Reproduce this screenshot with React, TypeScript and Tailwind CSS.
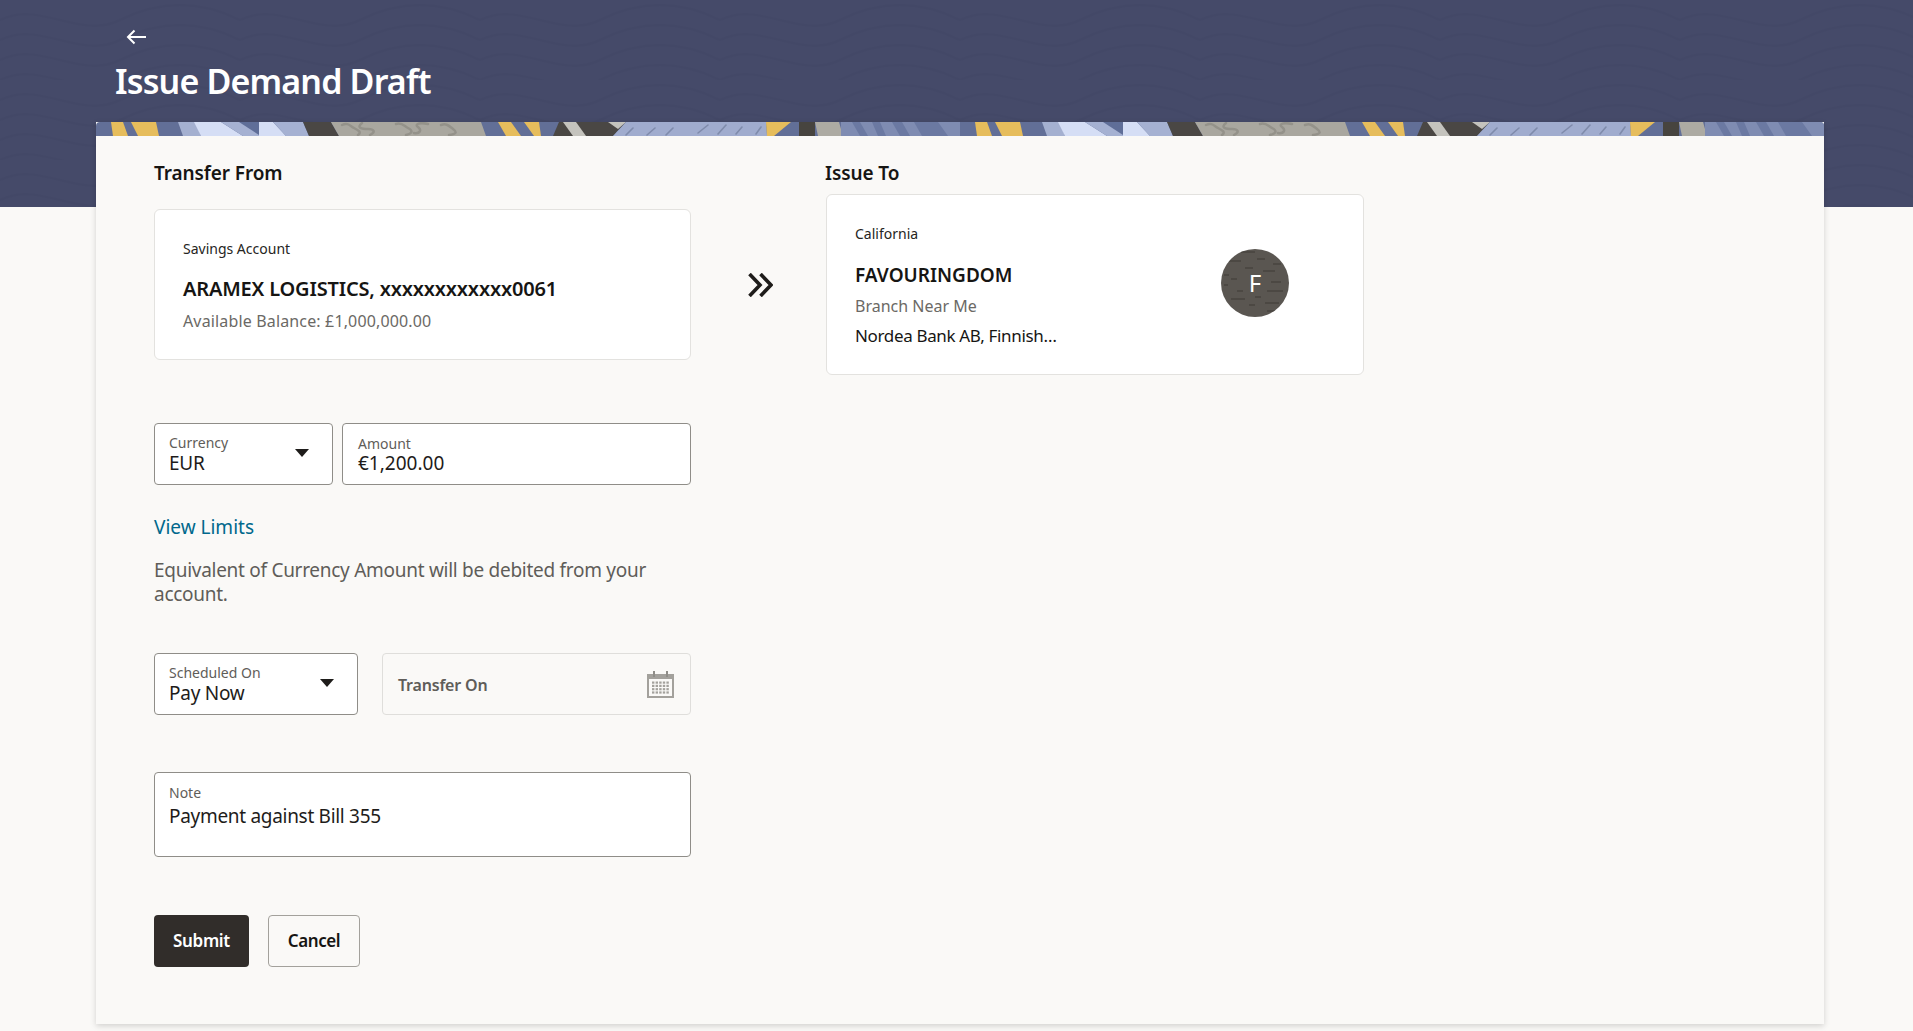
import * as React from "react"

const sans = "font-['Noto_Sans',sans-serif]"

function BannerTile({ x }: { x: number }) {
  return (
    <g transform={`translate(${x} 0)`}>
      <rect x="0" y="0" width="864" height="14" fill="#626f97" />
      <polygon points="15,0 27,0 32,14 17,14" fill="#e6bd5c" />
      <polygon points="35,0 60,0 63,14 42,14" fill="#e6bd5c" />
      <polygon points="82,0 100,0 105,14 87,14" fill="#a4b0d0" />
      <polygon points="98,0 125,0 147,14 105,14" fill="#d5def5" />
      <polygon points="125,0 163,0 163,14 147,14" fill="#a5b1d2" />
      <polygon points="143,0 163,0 163,13" fill="#5f6e98" />
      <polygon points="163,0 177,0 190,14 163,14" fill="#d5def5" />
      <polygon points="177,0 207,0 213,14 190,14" fill="#a5b1d2" />
      <polygon points="207,0 235,0 243,14 213,14" fill="#4a4744" />
      <polygon points="235,0 385,0 390,14 243,14" fill="#a9a79f" />
      <g fill="none" stroke="#94928a" strokeWidth="2.5" strokeLinecap="round">
        <path d="M246 3c6-3 8 1 12 3s8 4 4 7" />
        <path d="M266 1c-6 5 0 6 6 6s8 3 2 6" />
        <path d="M300 2c6-2 8 2 12 4s6 5-2 7" />
        <path d="M318 11c6 1 8-3 4-6s2-5 10-3" />
        <path d="M345 3c6-2 8 1 12 4s4 5-4 6" />
      </g>
      <polygon points="402,0 415,0 425,14 410,14" fill="#e6bd5c" />
      <polygon points="428,0 443,0 445,14 438,14" fill="#e6bd5c" />
      <polygon points="463,0 530,0 517,14 457,14" fill="#4a4744" />
      <polygon points="467,0 480,0 490,14 477,14" fill="#c4c3bd" />
      <polygon points="512,0 530,0 522,7" fill="#c4c3bd" />
      <polygon points="530,0 670,0 671,14 517,14" fill="#a0acce" />
      <g stroke="#7f8bab" strokeWidth="1.6" strokeLinecap="round">
        <path d="M530 13l7-7" />
        <path d="M551 13l8-7" />
        <path d="M570 13l7-7" />
        <path d="M602 11l10-8" />
        <path d="M622 12l8-9" />
        <path d="M640 12l6-7" />
        <path d="M660 12l5-7" />
      </g>
      <polygon points="670,0 695,0 678,14 671,14" fill="#e6bd5c" />
      <polygon points="703,0 719,0 719,14 703,14" fill="#47443f" />
      <polygon points="719,0 743,0 747,14 722,14" fill="#adaba3" />
      <rect x="745" y="0" width="119" height="14" fill="#7f8cb2" />
      <g fill="#6b79a2">
        <polygon points="756,0 764,0 772,14 764,14" />
        <polygon points="776,0 784,0 790,14 782,14" />
        <polygon points="796,0 806,0 814,14 804,14" />
        <polygon points="818,0 842,0 852,14 826,14" />
      </g>
    </g>
  )
}

function BackArrow() {
  return (
    <svg width="20" height="16" viewBox="0 0 20 16" fill="none" stroke="#fff" strokeWidth="2">
      <path d="M20 8H2" />
      <path d="M8.5 1.5 2 8l6.5 6.5" />
    </svg>
  )
}

function Caret() {
  return (
    <svg width="14" height="8" viewBox="0 0 14 8">
      <path d="M0 0h14L7 8z" fill="#1e1c1a" />
    </svg>
  )
}

function Field({ label, value, className, valueClass, caret }: { label: string; value: string; className: string; valueClass: string; caret?: boolean }) {
  return (
    <div className={`flex h-[62px] items-start justify-between rounded border border-[#8f8d88] bg-white ${className}`}>
      <div>
        <div className="text-[14px] leading-4 text-[#5f5d59]">{label}</div>
        <div className={`text-[19px] leading-6 text-[#1e1c1a] ${valueClass}`}>{value}</div>
      </div>
      {caret && (
        <div className="mr-[23px] mt-[14px]">
          <Caret />
        </div>
      )}
    </div>
  )
}

function CalendarIcon() {
  return (
    <svg width="27" height="27" viewBox="0 0 27 27" fill="none">
      <rect x="1" y="4" width="25" height="22" stroke="#a3a19c" strokeWidth="2" />
      <rect x="1" y="4" width="25" height="4" fill="#a3a19c" />
      <path d="M7 0v6M20 0v6" stroke="#8f8d88" strokeWidth="2" />
      <g fill="#a3a19c">
        {[0, 1, 2, 3].map((r) =>
          [0, 1, 2, 3, 4].map((c) => <rect key={`${r}-${c}`} x={5 + c * 3.6} y={10.5 + r * 3.3} width="2.4" height="2.2" />),
        )}
      </g>
    </svg>
  )
}

export default function App() {
  return (
    <div className={`h-screen overflow-hidden bg-[#faf9f7] ${sans}`}>
      <div className="relative h-[207px] overflow-hidden bg-[#454a69] pl-[115px] pt-[29px]">
        <svg className="absolute inset-0 h-full w-full opacity-[0.04]" fill="none" stroke="#20243f" strokeWidth="2">
          <defs>
            <pattern id="swirl" width="240" height="80" patternUnits="userSpaceOnUse">
              <path d="M0 20c40-20 80 20 120 0s80-20 120 0" />
              <path d="M0 40c40-20 80 20 120 0s80-20 120 0" />
              <path d="M0 60c40-20 80 20 120 0s80-20 120 0" />
              <path d="M0 80c40-20 80 20 120 0s80-20 120 0" />
            </pattern>
          </defs>
          <rect width="100%" height="100%" fill="url(#swirl)" stroke="none" />
        </svg>
        <div className="relative">
          <div className="pl-[11px]">
            <BackArrow />
          </div>
          <h1 className="mt-[16px] text-[34px] font-semibold leading-10 tracking-[-0.85px] text-white">Issue Demand Draft</h1>
        </div>
      </div>

      <div className="relative ml-[96px] mt-[-85px] h-[902px] w-[1728px] bg-[#faf9f7] shadow-[0_2px_6px_rgba(0,0,0,0.16)]">
        <svg className="block h-[14px] w-full rounded-t-sm" viewBox="0 0 1728 14" preserveAspectRatio="none">
          <BannerTile x={0} />
          <BannerTile x={864} />
        </svg>

        <div className="flex pl-[58px] pt-[25px]">
          <div className="w-[537px]">
            <h2 className="text-[19px] font-semibold leading-6 tracking-[-0.1px] text-[#161513]">Transfer From</h2>
            <div className="mt-6 h-[151px] rounded-md border border-[#e3e2df] bg-white pl-[28px] pt-[29px]">
              <div className="text-[14px] leading-5 text-[#262522]">Savings Account</div>
              <div className="mt-[18px] text-[20px] font-semibold leading-6 tracking-[-0.18px] text-[#161513]">ARAMEX LOGISTICS, xxxxxxxxxxxx0061</div>
              <div className="mt-2 text-[16px] leading-6 tracking-[0.15px] text-[#6b6965]">Available Balance: £1,000,000.00</div>
            </div>

            <div className="mt-[63px] flex gap-[9px]">
              <Field label="Currency" value="EUR" className="w-[179px] pl-[14px] pt-[11px]" valueClass="tracking-[-0.25px]" caret />
              <Field label="Amount" value="€1,200.00" className="w-[349px] pl-[15px] pt-[12px]" valueClass="-mt-px" />
            </div>

            <a className="mt-[30px] block text-[19px] leading-6 text-[#00688c]">View Limits</a>
            <p className="mt-[19px] w-[520px] text-[19px] leading-6 tracking-[-0.28px] text-[#5f5d59]">Equivalent of Currency Amount will be debited from your account.</p>

            <div className="mt-[47px] flex gap-[24px]">
              <Field label="Scheduled On" value="Pay Now" className="w-[204px] pl-[14px] pt-[11px]" valueClass="tracking-[-0.25px]" caret />
              <div className="flex h-[62px] w-[309px] items-center justify-between rounded border border-[#dfdedb] pl-[15px] pr-4">
                <span className="mt-[2px] text-[16px] font-semibold tracking-[-0.2px] text-[#5f5d59]">Transfer On</span>
                <CalendarIcon />
              </div>
            </div>

            <div className="mt-[57px] h-[85px] rounded border border-[#8f8d88] bg-white pl-[14px] pt-[12px]">
              <div className="text-[14px] leading-4 text-[#5f5d59]">Note</div>
              <div className="mt-[3px] text-[19px] leading-6 tracking-[-0.3px] text-[#1e1c1a]">Payment against Bill 355</div>
            </div>

            <div className="mt-[58px] flex gap-[19px]">
              <button className="h-[52px] w-[95px] rounded bg-[#312d2a] text-[17px] font-semibold tracking-[-0.35px] text-white">Submit</button>
              <button className="h-[52px] w-[92px] rounded border border-[#a3a19c] text-[17px] font-semibold tracking-[-0.4px] text-[#161513]">Cancel</button>
            </div>
          </div>

          <div className="w-[134px] pl-[57px] pt-[112px]">
            <svg width="25" height="24" viewBox="0 0 25 24" fill="none" stroke="#1e1c1a" strokeWidth="3.6">
              <path d="M1.5 1 12 12 1.5 23" />
              <path d="M12.5 1 23 12 12.5 23" />
            </svg>
          </div>

          <div className="w-[539px]">
            <h2 className="text-[19px] font-semibold leading-6 tracking-[-0.1px] text-[#161513]">Issue To</h2>
            <div className="ml-px mt-[9px] flex h-[181px] w-[538px] rounded-md border border-[#e3e2df] bg-white pl-[28px] pt-[29px]">
              <div className="w-[365px]">
                <div className="text-[14px] leading-5 text-[#262522]">California</div>
                <div className="mt-[19px] text-[19px] font-semibold leading-6 text-[#161513]">FAVOURINGDOM</div>
                <div className="mt-[7px] text-[16px] leading-6 text-[#6b6965]">Branch Near Me</div>
                <div className="mt-[6px] text-[17px] leading-6 tracking-[-0.35px] text-[#161513]">Nordea Bank AB, Finnish…</div>
              </div>
              <div className="relative ml-px mt-[25px] flex h-[68px] w-[68px] items-center justify-center overflow-hidden rounded-full bg-[#5a5651] text-[24px] text-white">
                <svg className="absolute inset-0" width="68" height="68" stroke="#3e3b37" strokeWidth="1">
                  <path d="M20 3h14M6 12h14M36 10h8M52 15h8M24 19h8M3 26h5M42 22h12M10 30h6M50 33h10M3 36h4M16 42h6M46 42h16M10 50h14M34 48h6M44 54h14M28 56h6M46 62h10" />
                </svg>
                <span className="relative">F</span>
              </div>
            </div>
          </div>
        </div>
      </div>
    </div>
  )
}
